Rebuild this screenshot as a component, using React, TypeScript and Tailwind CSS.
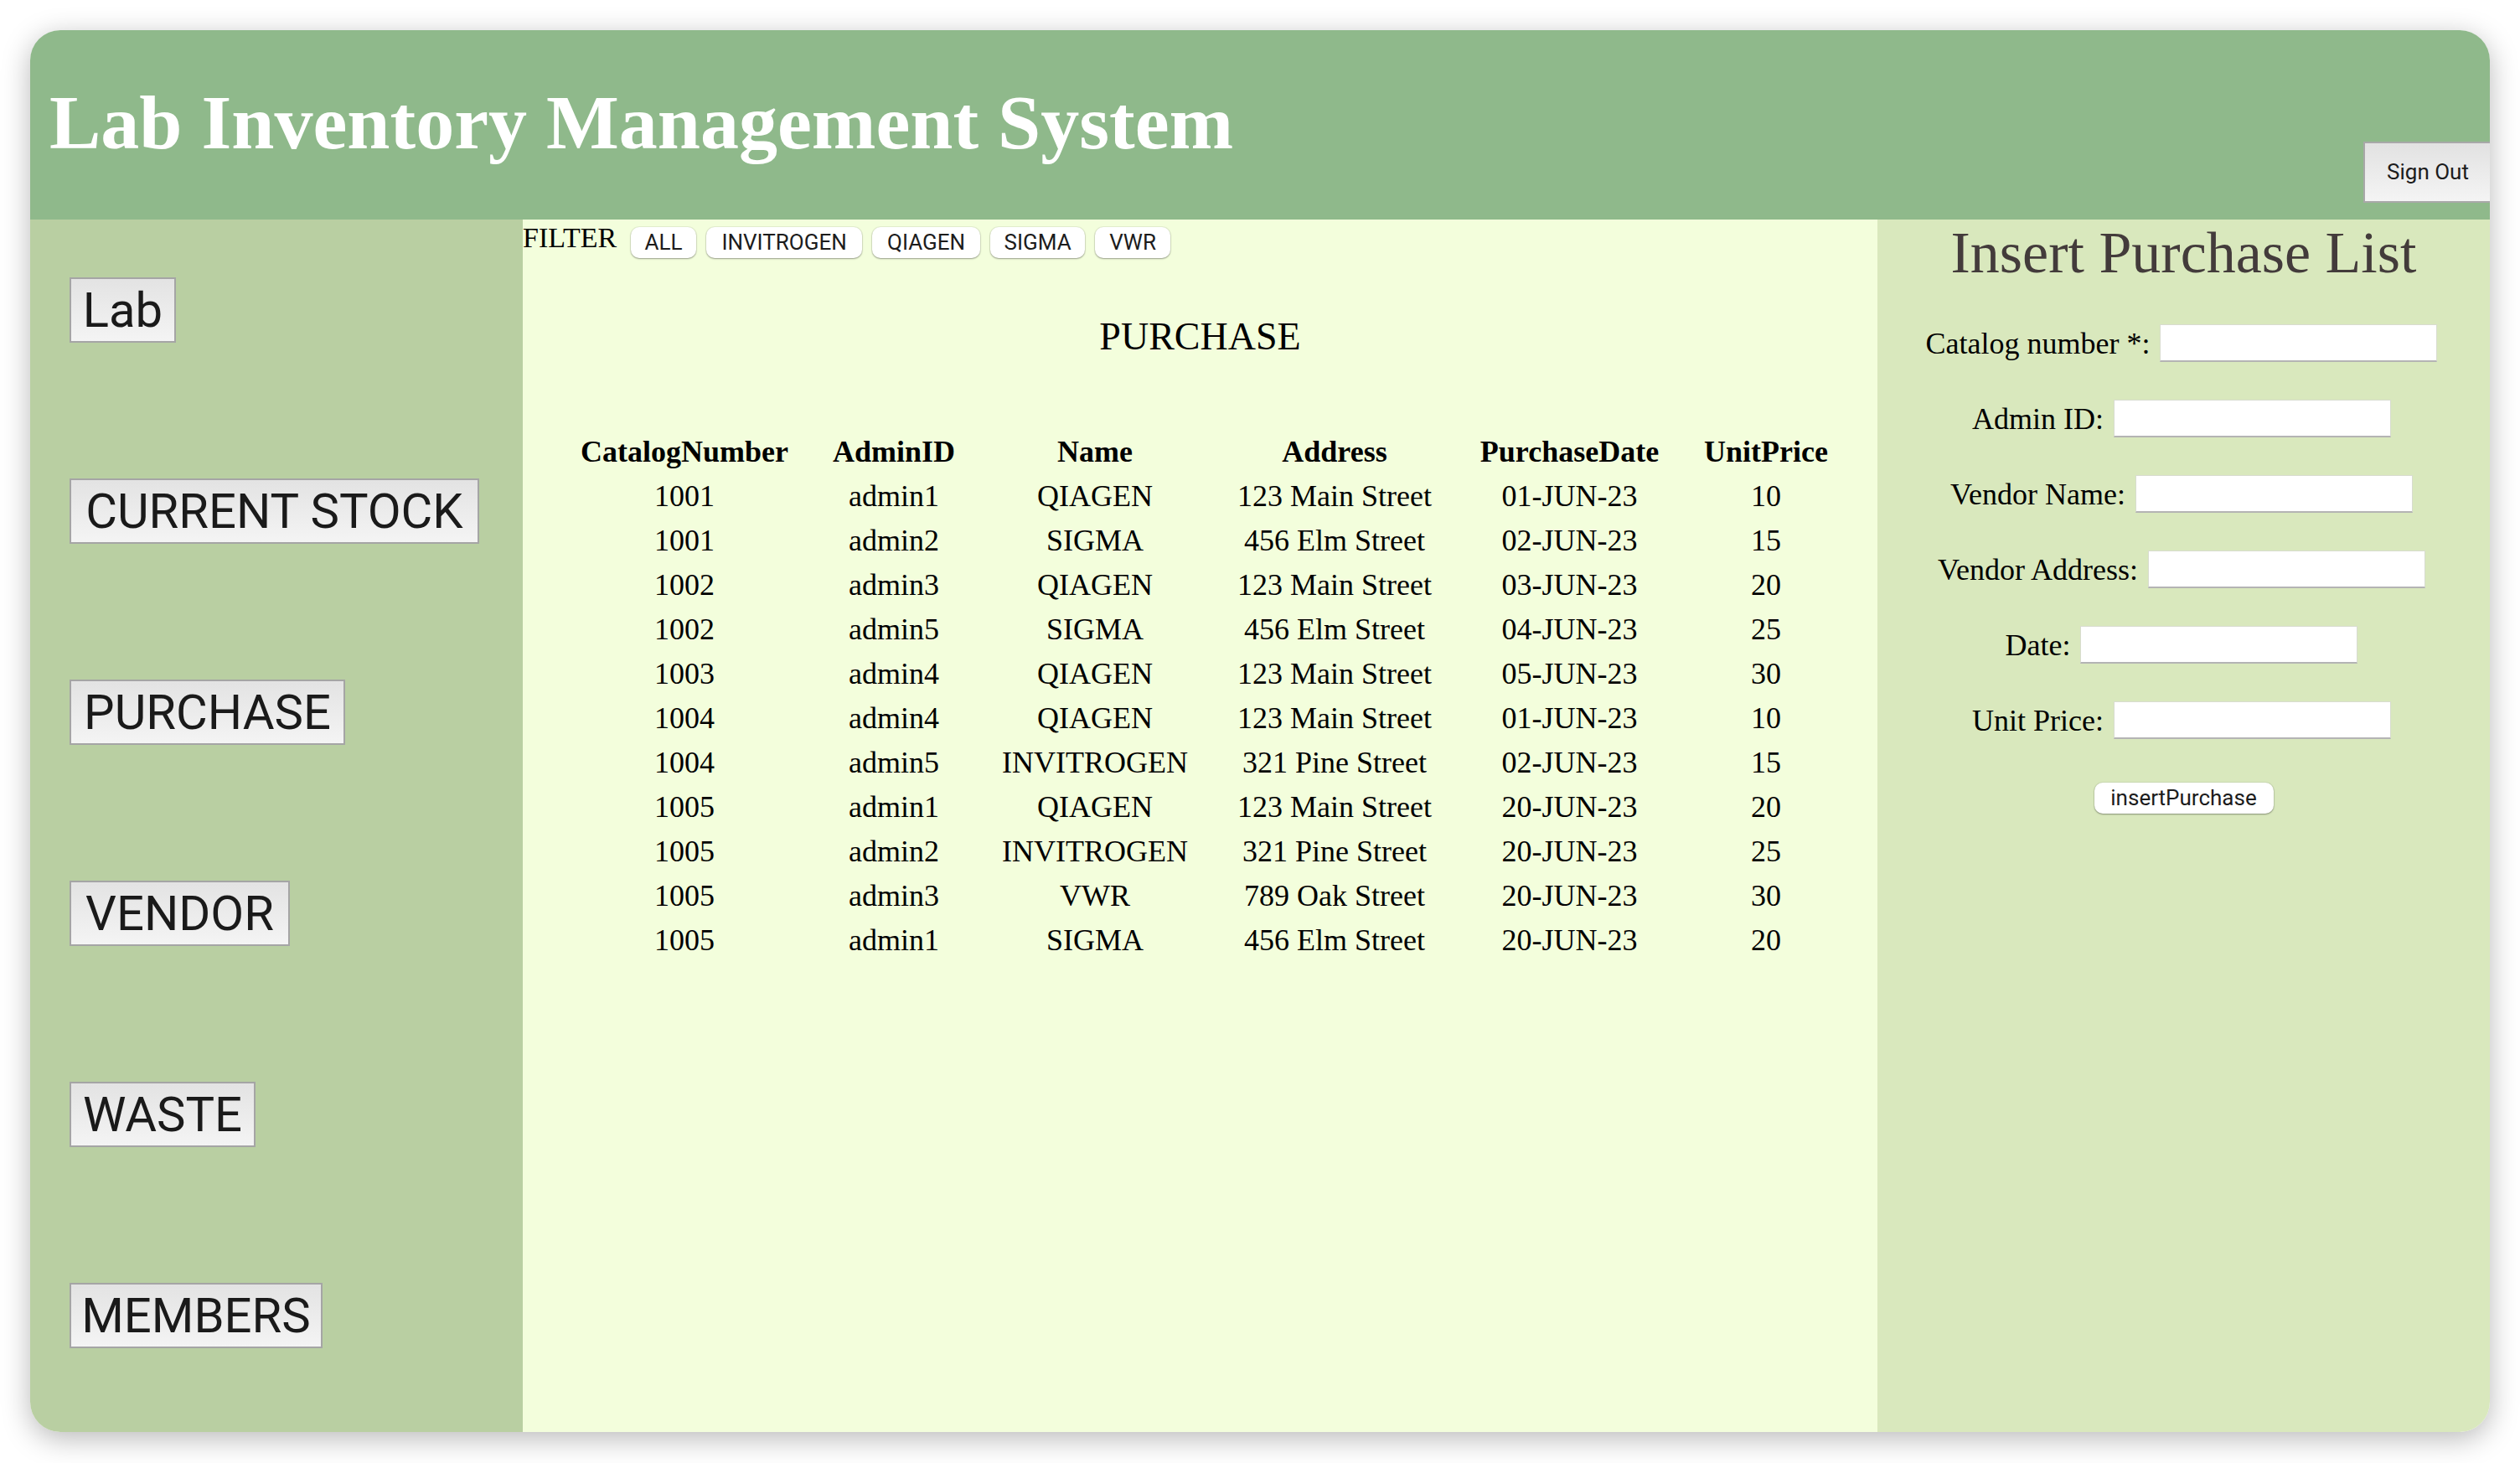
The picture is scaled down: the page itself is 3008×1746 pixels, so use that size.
import React from "react";

const rows: string[][] = [
  ["1001", "admin1", "QIAGEN", "123 Main Street", "01-JUN-23", "10"],
  ["1001", "admin2", "SIGMA", "456 Elm Street", "02-JUN-23", "15"],
  ["1002", "admin3", "QIAGEN", "123 Main Street", "03-JUN-23", "20"],
  ["1002", "admin5", "SIGMA", "456 Elm Street", "04-JUN-23", "25"],
  ["1003", "admin4", "QIAGEN", "123 Main Street", "05-JUN-23", "30"],
  ["1004", "admin4", "QIAGEN", "123 Main Street", "01-JUN-23", "10"],
  ["1004", "admin5", "INVITROGEN", "321 Pine Street", "02-JUN-23", "15"],
  ["1005", "admin1", "QIAGEN", "123 Main Street", "20-JUN-23", "20"],
  ["1005", "admin2", "INVITROGEN", "321 Pine Street", "20-JUN-23", "25"],
  ["1005", "admin3", "VWR", "789 Oak Street", "20-JUN-23", "30"],
  ["1005", "admin1", "SIGMA", "456 Elm Street", "20-JUN-23", "20"],
];

const headers = ["CatalogNumber", "AdminID", "Name", "Address", "PurchaseDate", "UnitPrice"];
const colW = ["w-[300px]", "w-[200px]", "w-[280px]", "w-[292px]", "w-[269px]", "w-[200px]"];

const navs: { label: string; w: string }[] = [
  { label: "Lab", w: "w-[127px]" },
  { label: "CURRENT STOCK", w: "w-[489px]" },
  { label: "PURCHASE", w: "w-[329px]" },
  { label: "VENDOR", w: "w-[263px]" },
  { label: "WASTE", w: "w-[222px]" },
  { label: "MEMBERS", w: "w-[302px]" },
];

const filters: { label: string; w: string }[] = [
  { label: "ALL", w: "w-[78px]" },
  { label: "INVITROGEN", w: "w-[186px]" },
  { label: "QIAGEN", w: "w-[129px]" },
  { label: "SIGMA", w: "w-[113px]" },
  { label: "VWR", w: "w-[90px]" },
];

const fields = ["Catalog number *:", "Admin ID:", "Vendor Name:", "Vendor Address:", "Date:", "Unit Price:"];

export default function App() {
  return (
    <div className="w-[3008px] h-[1746px] bg-white pt-[36px] pl-[36px]">
      <div className="w-[2936px] h-[1673px] rounded-[36px] overflow-hidden shadow-[0_8px_34px_rgba(0,0,0,0.28)] flex flex-col font-['Liberation_Serif',serif]">
        {/* Header */}
        <header className="h-[226px] shrink-0 bg-[#8fb98b] flex">
          <h1 className="pl-[23px] pt-[57px] text-[92px] leading-[106px] font-bold text-white font-['Liberation_Serif',serif] whitespace-nowrap">
            Lab Inventory Management System
          </h1>
          <button className="ml-auto self-end mb-[20px] mr-[-3px] h-[73px] w-[154px] border-2 border-[#a8a8a8] bg-linear-to-b from-[#e2e2e2] to-[#f4f4f4] text-[26px] text-[#1c1c1c] font-['Roboto',sans-serif]">
            Sign Out
          </button>
        </header>

        <div className="flex flex-1">
          {/* Sidebar */}
          <aside className="w-[588px] shrink-0 bg-[#b9cfa2] pl-[47px] pt-[69px] flex flex-col items-start gap-[162px]">
            {navs.map((n) => (
              <button
                key={n.label}
                className={`${n.w} h-[78px] border-2 border-[#a5a5a5] bg-linear-to-b from-[#e3e3e3] to-[#f4f4f4] text-[58px] leading-[68px] text-[#1a1a1a] font-['Roboto',sans-serif] text-center whitespace-nowrap`}
              >
                {n.label}
              </button>
            ))}
          </aside>

          {/* Main */}
          <main className="w-[1617px] shrink-0 bg-[#f3fedc] flex flex-col">
            <div className="flex items-start h-[46px]">
              <span className="mt-[2px] text-[34px] leading-[39px] text-black">FILTER</span>
              <div className="flex gap-[12px] ml-[17px] mt-[9px]">
                {filters.map((f) => (
                  <button
                    key={f.label}
                    className={`${f.w} h-[37px] rounded-[10px] bg-white shadow-[0_1px_2px_rgba(0,0,0,0.35),0_0_0_1px_rgba(0,0,0,0.05)] text-[26px] leading-[37px] text-[#1c1c1c] font-['Roboto',sans-serif]`}
                  >
                    {f.label}
                  </button>
                ))}
              </div>
            </div>
            <h2 className="mt-[67px] text-center text-[46px] leading-[53px] text-black">PURCHASE</h2>
            <table className="mt-[85px] ml-[43px] border-collapse table-fixed w-[1541px]">
              <thead>
                <tr>
                  {headers.map((h, i) => (
                    <th key={h} className={`${colW[i]} h-[53px] p-0 leading-[53px] text-center text-[36px] font-bold text-black`}>
                      {h}
                    </th>
                  ))}
                </tr>
              </thead>
              <tbody>
                {rows.map((r, ri) => (
                  <tr key={ri}>
                    {r.map((c, ci) => (
                      <td key={ci} className="h-[53px] p-0 leading-[53px] text-center text-[36px] text-black whitespace-nowrap">
                        {c}
                      </td>
                    ))}
                  </tr>
                ))}
              </tbody>
            </table>
          </main>

          {/* Right panel */}
          <section className="flex-1 bg-[#d9e8bd] flex flex-col items-center">
            <h2 className="text-[70px] leading-[80px] text-[#433b3b] whitespace-nowrap">Insert Purchase List</h2>
            <div className="mt-[45px] mr-[5px] flex flex-col gap-[45px]">
              {fields.map((f) => (
                <div key={f} className="flex items-center justify-center gap-[12px] h-[45px]">
                  <span className="text-[36px] text-black whitespace-nowrap">{f}</span>
                  <input
                    type="text"
                    className="w-[331px] h-[45px] bg-white border border-[#d8dccf] border-b-2 border-b-[#b4b4b4] outline-none"
                  />
                </div>
              ))}
            </div>
            <button className="mt-[52px] w-[214px] h-[37px] rounded-[10px] bg-white shadow-[0_1px_2px_rgba(0,0,0,0.35),0_0_0_1px_rgba(0,0,0,0.05)] text-[26px] leading-[37px] text-[#1c1c1c] font-['Roboto',sans-serif]">
              insertPurchase
            </button>
          </section>
        </div>
      </div>
    </div>
  );
}
